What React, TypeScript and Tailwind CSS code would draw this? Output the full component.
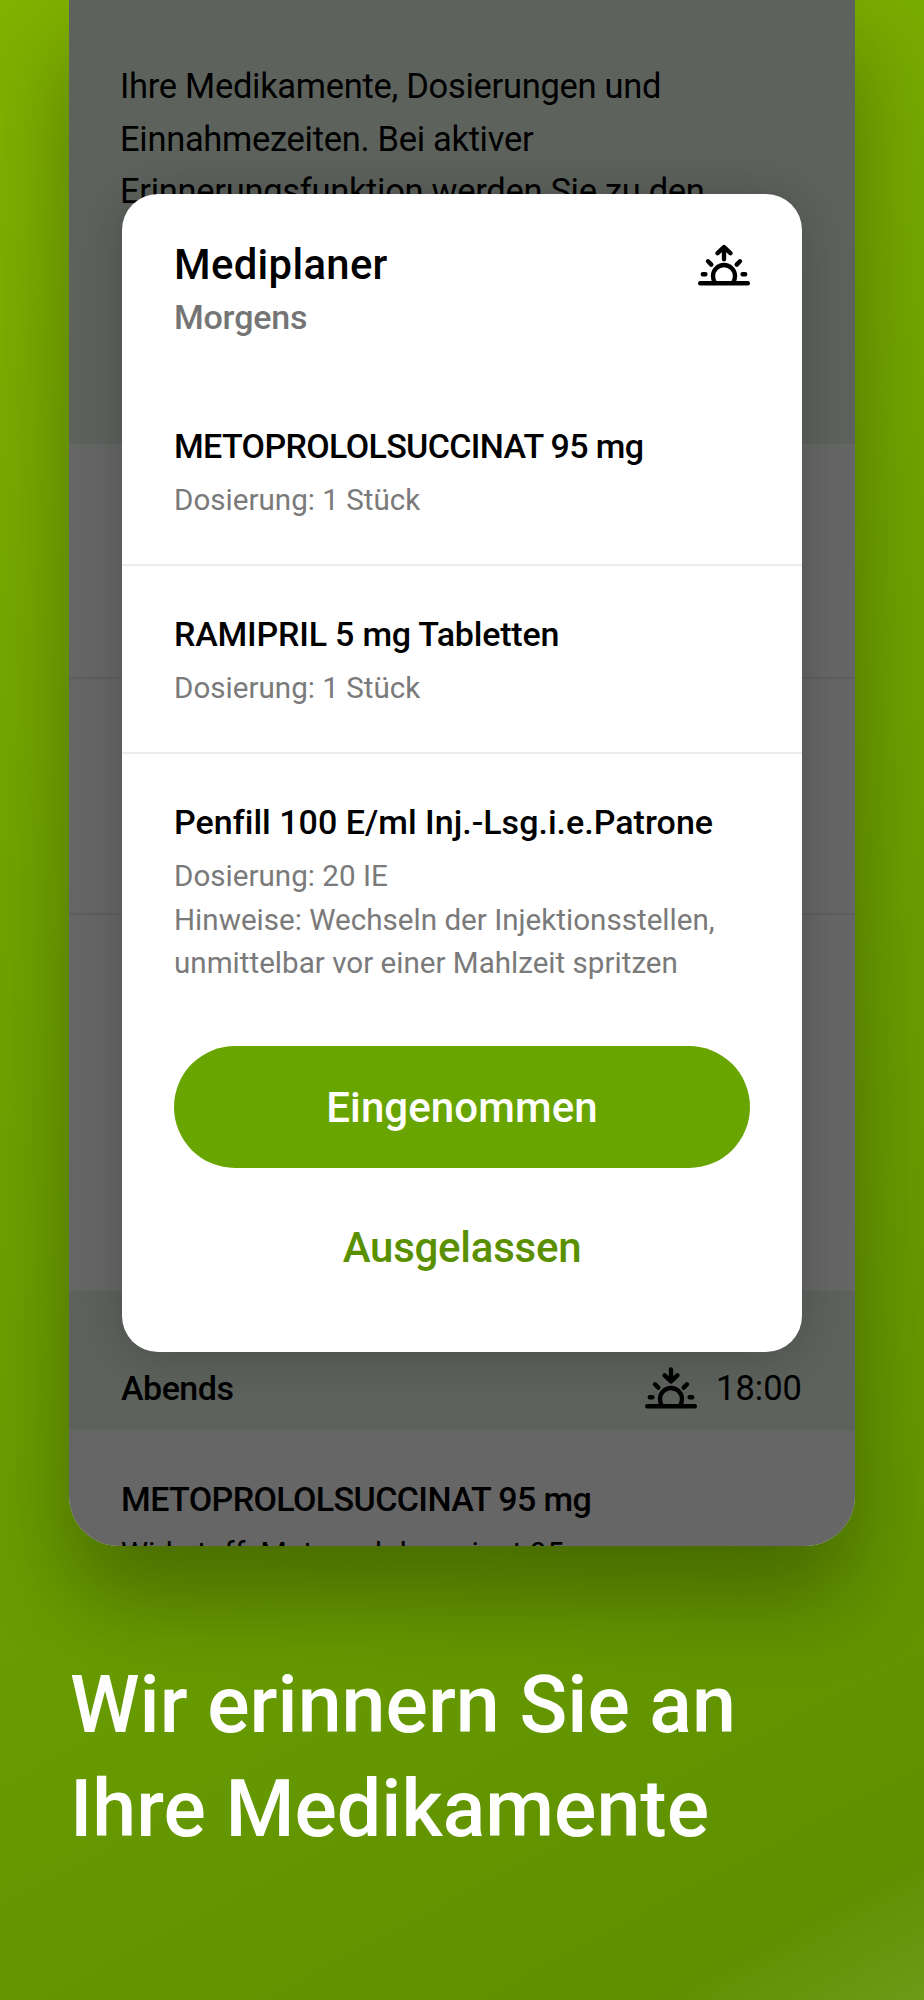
interface Medication {
  name: string;
  nameClass: string;
  details: string[];
}

const medications: Medication[] = [
  {
    name: "METOPROLOLSUCCINAT 95 mg",
    nameClass: "tracking-[-0.64px]",
    details: ["Dosierung: 1 Stück"],
  },
  {
    name: "RAMIPRIL 5 mg Tabletten",
    nameClass: "tracking-[-0.2px]",
    details: ["Dosierung: 1 Stück"],
  },
  {
    name: "Penfill 100 E/ml Inj.-Lsg.i.e.Patrone",
    nameClass: "tracking-[0.02px]",
    details: [
      "Dosierung: 20 IE",
      "Hinweise: Wechseln der Injektionsstellen,",
      "unmittelbar vor einer Mahlzeit spritzen",
    ],
  },
];

function SunIcon({ direction }: { direction: "up" | "down" }) {
  return (
    <svg
      width="52"
      height="42"
      viewBox="0 0 52 42"
      fill="none"
      stroke="black"
      strokeWidth="4.4"
      strokeLinecap="round"
      strokeLinejoin="round"
    >
      <path d="M2.2 39.2H49.8" />
      <path d="M16.8 38.5C15.6 36.6 15 34.6 15 32a11 11 0 0 1 22 0c0 2.6-.6 4.6-1.8 6.5" />
      <path d="M4.8 30.2H7.4M44.6 30.2H47.2" />
      <path d="M10 17.3L13.3 20.6M42 17.3L38.7 20.6" />
      {direction === "up" ? (
        <path d="M26 3.5V15.2M19.6 9.2L26 3L32.4 9.2" />
      ) : (
        <path d="M26 2.4V14M19.6 8.3L26 14.5L32.4 8.3" />
      )}
    </svg>
  );
}

function PlanScreen() {
  return (
    <div className="h-full bg-white text-[34.5px] leading-[52.5px] text-black">
      <div className="h-[444px] bg-[#e8f5e8] pl-[51px] pt-[60px] tracking-[-0.3px] whitespace-nowrap">
        <p>Ihre Medikamente, Dosierungen und</p>
        <p>Einnahmezeiten. Bei aktiver</p>
        <p>Erinnerungsfunktion werden Sie zu den</p>
      </div>
      <div className="h-[235px] border-b-2 border-[#ebebeb]" />
      <div className="h-[236px] border-b-2 border-[#ebebeb]" />
      <div className="h-[376px]" />
      <div className="flex h-[139px] justify-between bg-[#e8f5e8] pl-[52px] pr-[53px] pt-[71px]">
        <span className="text-[34px] font-medium tracking-[-0.5px]">
          Abends
        </span>
        <div className="flex gap-[19px]">
          <div className="pt-[5px]">
            <SunIcon direction="down" />
          </div>
          <span>18:00</span>
        </div>
      </div>
      <div className="pl-[52px] pt-[43px] whitespace-nowrap">
        <p className="text-[34px] font-medium tracking-[-0.6px]">
          METOPROLOLSUCCINAT 95 mg
        </p>
        <p className="pt-[6px] text-[30.5px] leading-[43.5px]">
          Wirkstoff: Metoprololsuccinat 95
        </p>
      </div>
    </div>
  );
}

function MedicationRow({ medication }: { medication: Medication }) {
  return (
    <li className="h-[188px] border-b-2 border-[#ececec] px-[52px] pt-[42px] whitespace-nowrap last:h-[292px] last:border-b-0">
      <h3 className="text-[34px] leading-[52px] font-medium">
        <span className={medication.nameClass}>{medication.name}</span>
      </h3>
      <div className="pt-[7px] text-[29.6px] leading-[43.5px] text-[#7a7a7a]">
        {medication.details.map((line) => (
          <p key={line}>{line}</p>
        ))}
      </div>
    </li>
  );
}

function MediplanerDialog() {
  return (
    <div className="absolute left-[53px] top-[194px] h-[1158px] w-[680px] rounded-[36px] bg-white text-black shadow-[0_4px_50px_rgba(0,0,0,0.2)]">
      <header className="flex h-[184px] justify-between pl-[52px] pr-[52px] pt-[44px]">
        <div className="font-medium">
          <h2 className="text-[41.8px] leading-[53px] tracking-[0.35px]">
            Mediplaner
          </h2>
          <p className="text-[34px] leading-[52px] tracking-[-0.2px] text-[#757575]">
            Morgens
          </p>
        </div>
        <div className="pt-[6px]">
          <SunIcon direction="up" />
        </div>
      </header>
      <ul>
        {medications.map((medication) => (
          <MedicationRow key={medication.name} medication={medication} />
        ))}
      </ul>
      <div className="flex flex-col px-[52px] text-[42px] leading-[52px] font-medium">
        <button className="h-[122px] rounded-full bg-[#69a500] pt-[1px] tracking-[0.1px] text-white">
          Eingenommen
        </button>
        <button className="mt-[54px] tracking-[-0.25px] text-[#5a9000]">
          Ausgelassen
        </button>
      </div>
    </div>
  );
}

export default function App() {
  return (
    <div className="h-[2000px] w-[924px] overflow-hidden bg-[linear-gradient(152deg,#81b200_0%,#70a400_40%,#689b00_68%,#5f9000_94%,#6d9a18_100%)] font-['Roboto',sans-serif]">
      <div className="ml-[69px] h-[1546px] w-[786px] rounded-b-[50px] shadow-[0_50px_90px_rgba(0,0,0,0.31)]">
        <div className="relative h-full overflow-hidden rounded-b-[50px]">
          <PlanScreen />
          <div className="absolute inset-0 bg-black/60" />
          <MediplanerDialog />
        </div>
      </div>
      <h1 className="pl-[70px] pt-[107px] text-[79px] leading-[104px] font-medium text-white">
        Wir erinnern Sie an
        <br />
        Ihre Medikamente
      </h1>
    </div>
  );
}
